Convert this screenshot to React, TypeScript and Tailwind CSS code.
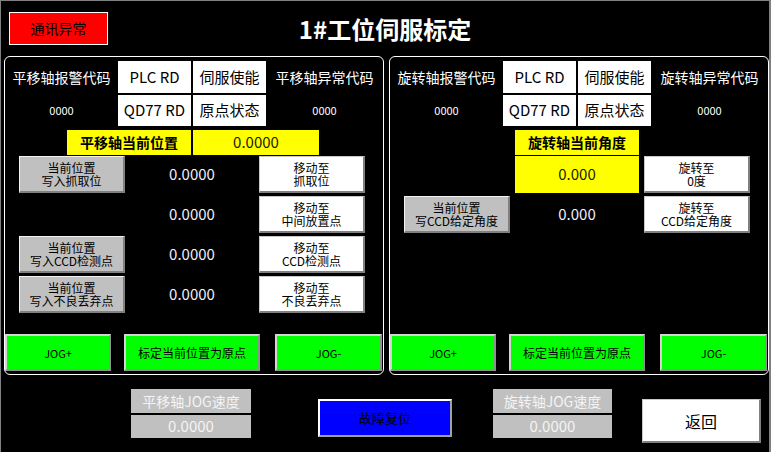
import React from "react";

type Variant = "gray" | "white" | "green" | "blue";

const bevel: Record<Variant, string> = {
  gray: "bg-[#c0c0c0] border-t border-l border-r-2 border-b-2 border-t-[#f4f4f4] border-l-[#f4f4f4] border-r-[#808080] border-b-[#808080]",
  white: "bg-white border-t border-l border-r-2 border-b-2 border-t-[#c8c8c8] border-l-[#c8c8c8] border-r-[#808080] border-b-[#808080]",
  green: "bg-[#00ff00] border-2 border-t-[#d4d4d4] border-l-[#d4d4d4] border-r-[#909090] border-b-[#909090]",
  blue: "bg-[#0000ff] border-2 border-t-white border-l-white border-r-[#a0a0a0] border-b-[#a0a0a0]",
};

function Btn({
  lines,
  variant,
  className = "",
  textClass = "text-[12px] leading-[13px]",
}: {
  lines: string[];
  variant: Variant;
  className?: string;
  textClass?: string;
}) {
  return (
    <div className={`flex items-center justify-center text-black ${bevel[variant]} ${className}`}>
      <p className={`text-center ${textClass}`}>
        {lines.map((l, i) => (
          <React.Fragment key={l}>
            {i > 0 && <br />}
            {l}
          </React.Fragment>
        ))}
      </p>
    </div>
  );
}

function Cell({ children }: { children: React.ReactNode }) {
  return (
    <div className="w-[73px] h-full bg-white text-black text-[15px] flex items-center justify-center">
      {children}
    </div>
  );
}

type Row = {
  left?: string[];
  middle: React.ReactNode;
  right: string[];
};

function Value({ v }: { v: string }) {
  return <span className="text-[#f0f0ff] text-[15px]">{v}</span>;
}

function Panel({
  axis,
  header,
  rows,
}: {
  axis: string;
  header: React.ReactNode;
  rows: Row[];
}) {
  return (
    <div className="w-[380px] h-[319px] border border-white rounded-[6px] flex flex-col">
      {/* status block */}
      <div className="pt-[4px] flex flex-col gap-[2px]">
        <div className="flex h-[32px] items-center">
          <div className="w-[113px] text-center text-white text-[14px]">{axis}报警代码</div>
          <div className="flex gap-[2px] h-full">
            <Cell>PLC RD</Cell>
            <Cell>伺服使能</Cell>
          </div>
          <div className="flex-1 text-center text-white text-[14px]">{axis}异常代码</div>
        </div>
        <div className="flex h-[31px] items-center">
          <div className="w-[113px] text-center text-white text-[11px]">0000</div>
          <div className="flex gap-[2px] h-full">
            <Cell>QD77 RD</Cell>
            <Cell>原点状态</Cell>
          </div>
          <div className="flex-1 text-center text-white text-[11px]">0000</div>
        </div>
      </div>

      <div className="mt-[4px] h-[25px] flex">{header}</div>

      <div className="mt-[1px] flex flex-col gap-[3px]">
        {rows.map((r, i) => (
          <div key={i} className="h-[37px] flex pl-[14px]">
            <div className="w-[106px] h-full">
              {r.left && <Btn lines={r.left} variant="gray" className="w-full h-full" />}
            </div>
            <div className="w-[134px] h-full flex items-center justify-center">{r.middle}</div>
            <Btn lines={r.right} variant="white" className="w-[106px] h-full" />
          </div>
        ))}
      </div>

      <div className="mt-auto pb-[3px] flex h-[40px]">
        <Btn
          lines={["JOG+"]}
          variant="green"
          className="w-[106px] h-[37px]"
          textClass="text-[11px] leading-[12px]"
        />
        <Btn
          lines={["标定当前位置为原点"]}
          variant="green"
          className="ml-[13px] w-[136px] h-[37px]"
          textClass="text-[12px] leading-[14px]"
        />
        <Btn
          lines={["JOG-"]}
          variant="green"
          className="ml-[15px] w-[107px] h-[37px]"
          textClass="text-[11px] leading-[12px]"
        />
      </div>
    </div>
  );
}

function SpeedBox({ label }: { label: string }) {
  return (
    <div className="flex flex-col gap-[2px] mt-[14px]">
      <div className="h-[24px] bg-[#c0c0c0] text-[#f4f4f4] text-[14px] flex items-center justify-center">
        {label}
      </div>
      <div className="h-[23px] bg-[#c0c0c0] text-[#f4f4f4] text-[15px] flex items-center justify-center">
        0.0000
      </div>
    </div>
  );
}

export default function App() {
  return (
    <div className="w-[771px] h-[452px] bg-black border-t border-l border-r-2 border-[#808080] overflow-hidden font-['Noto_Sans_CJK_SC','Noto_Sans',sans-serif]">
      {/* title bar */}
      <div className="h-[55px] grid grid-cols-[1fr_auto_1fr] items-center">
        <div className="pl-[8px]">
          <div className="w-[99px] h-[33px] bg-[#ff0000] border border-white flex items-center justify-center text-black text-[14px]">
            通讯异常
          </div>
        </div>
        <div className="text-white text-[24px] font-bold leading-none">1#工位伺服标定</div>
        <div />
      </div>

      {/* axis panels */}
      <div className="flex gap-[5px] pl-[3px]">
        <Panel
          axis="平移轴"
          header={
            <div className="ml-[62px] flex gap-[2px] h-full">
              <div className="w-[124px] bg-[#ffff00] text-black font-bold text-[14px] flex items-center justify-center">
                平移轴当前位置
              </div>
              <div className="w-[126px] bg-[#ffff00] text-[#202000] text-[15px] flex items-center justify-center">
                0.0000
              </div>
            </div>
          }
          rows={[
            { left: ["当前位置", "写入抓取位"], middle: <Value v="0.0000" />, right: ["移动至", "抓取位"] },
            { middle: <Value v="0.0000" />, right: ["移动至", "中间放置点"] },
            { left: ["当前位置", "写入CCD检测点"], middle: <Value v="0.0000" />, right: ["移动至", "CCD检测点"] },
            { left: ["当前位置", "写入不良丢弃点"], middle: <Value v="0.0000" />, right: ["移动至", "不良丢弃点"] },
          ]}
        />
        <Panel
          axis="旋转轴"
          header={
            <div className="ml-[125px] w-[124px] h-full bg-[#ffff00] text-black font-bold text-[14px] flex items-center justify-center">
              旋转轴当前角度
            </div>
          }
          rows={[
            {
              middle: (
                <div className="w-[124px] h-full bg-[#ffff00] text-[#202000] text-[15px] flex items-center justify-center">
                  0.000
                </div>
              ),
              right: ["旋转至", "0度"],
            },
            { left: ["当前位置", "写CCD给定角度"], middle: <Value v="0.000" />, right: ["旋转至", "CCD给定角度"] },
          ]}
        />
      </div>

      {/* bottom controls */}
      <div className="flex items-start pl-[130px]">
        <div className="w-[120px]">
          <SpeedBox label="平移轴JOG速度" />
        </div>
        <Btn
          lines={["故障复位"]}
          variant="blue"
          className="ml-[67px] mt-[24px] w-[134px] h-[38px]"
          textClass="text-[13px] leading-[14px]"
        />
        <div className="ml-[41px] w-[119px]">
          <SpeedBox label="旋转轴JOG速度" />
        </div>
        <Btn
          lines={["返回"]}
          variant="white"
          className="ml-[30px] mt-[24px] w-[119px] h-[44px]"
          textClass="text-[16px] leading-[18px]"
        />
      </div>
    </div>
  );
}
